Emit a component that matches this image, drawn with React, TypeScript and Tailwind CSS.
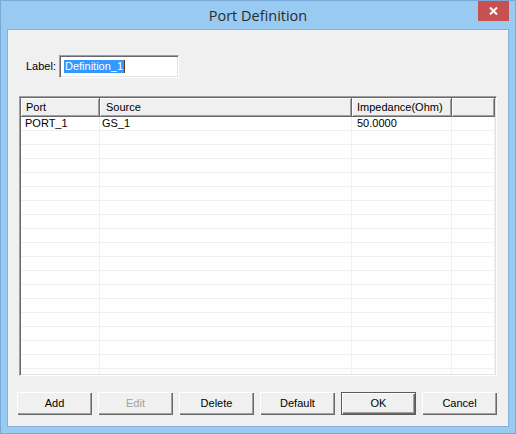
import React from "react";

const rows = Array.from({ length: 19 });

function Btn({ label, disabled, def }: { label: string; disabled?: boolean; def?: boolean }) {
  return (
    <div
      className={
        "w-[75px] h-[23px] flex items-center justify-center bg-[#f0f0f0] " +
        (def
          ? "border border-[#5a5a5a] shadow-[inset_1px_1px_0_#fff,inset_-1px_-1px_0_#696969,inset_-2px_-2px_0_#a0a0a0]"
          : "shadow-[inset_1px_1px_0_#fff,inset_-1px_-1px_0_#696969,inset_-2px_-2px_0_#a0a0a0]")
      }
    >
      <span className={disabled ? "text-[#a0a0a0]" : "text-black"}>{label}</span>
    </div>
  );
}

function HeadCell({ w, text, pl }: { w: string; text?: string; pl: string }) {
  return (
    <div
      className={
        w +
        " " +
        pl +
        " h-full flex items-center bg-[#f0f0f0] border-r border-b border-[#696969] shadow-[inset_1px_1px_0_#fff,inset_-1px_-1px_0_#a0a0a0] overflow-hidden whitespace-nowrap"
      }
    >
      {text}
    </div>
  );
}

export default function App() {
  return (
    <div className="w-[516px] h-[434px] bg-[#99cbf2] border border-[#7aa8d8] flex flex-col font-['Liberation_Sans',Tahoma,Arial,sans-serif] text-[11px] text-black">
      <div className="h-[28px] grid grid-cols-[1fr_auto_1fr] items-start">
        <div />
        <div className="h-[28px] flex items-center pt-[2px] font-['Open_Sans','Noto_Sans',sans-serif] text-[14.5px] text-[#2b2b2b]">
          Port Definition
        </div>
        <div className="flex justify-end pr-[6px]">
          <div className="w-[31px] h-[20px] bg-[#c75050] flex items-center justify-center">
            <svg width="9" height="8" viewBox="0 0 9 8">
              <path d="M1 0.5 L8 7.5 M8 0.5 L1 7.5" stroke="#fff" strokeWidth="2" />
            </svg>
          </div>
        </div>
      </div>
      <div className="mx-[6px] border border-[#86afdb] bg-[#f0f0f0] h-[398px] flex flex-col">
        <div className="flex items-center mt-[25px] ml-[18px] h-[23px]">
          <span className="w-[33px]">Label:</span>
          <div className="w-[120px] h-[23px] bg-white border-t border-l border-[#a0a0a0] border-r border-b border-r-white border-b-white shadow-[inset_1px_1px_0_#696969,inset_-1px_-1px_0_#e3e3e3] flex items-center pl-[4px]">
            <span className="bg-[#3399ff] text-white leading-[13px] h-[13px] px-[1px]">Definition_1</span>
            <span className="w-[1px] h-[13px] bg-[#5a3b1a]" />
          </div>
        </div>
        <div className="mt-[18px] ml-[11px] w-[478px] h-[280px] bg-white border-t border-l border-[#a0a0a0] border-r border-b border-r-white border-b-white shadow-[inset_1px_1px_0_#696969,inset_-1px_-1px_0_#e3e3e3] p-[1px] pr-[1px] overflow-hidden">
          <div className="h-full flex flex-col overflow-hidden">
            <div className="h-[19px] flex shrink-0">
              <HeadCell w="w-[79px]" pl="pl-[5px]" text="Port" />
              <HeadCell w="w-[252px]" pl="pl-[6px]" text="Source" />
              <HeadCell w="w-[100px]" pl="pl-[5px]" text="Impedance(Ohm)" />
              <HeadCell w="flex-1" pl="pl-[5px]" />
            </div>
            {rows.map((_, i) => (
              <div key={i} className="h-[14px] shrink-0 flex border-b border-[#f0f0f0]">
                <div className="w-[79px] pl-[4px] flex items-center border-r border-[#f0f0f0] leading-[13px]">
                  {i === 0 ? "PORT_1" : ""}
                </div>
                <div className="w-[252px] pl-[2px] flex items-center border-r border-[#f0f0f0] leading-[13px]">
                  {i === 0 ? "GS_1" : ""}
                </div>
                <div className="w-[100px] pl-[5px] flex items-center border-r border-[#f0f0f0] leading-[13px]">
                  {i === 0 ? "50.0000" : ""}
                </div>
                <div className="flex-1 border-r border-[#f0f0f0]" />
              </div>
            ))}
          </div>
        </div>
        <div className="mt-[16px] ml-[9px] flex gap-[6px]">
          <Btn label="Add" />
          <Btn label="Edit" disabled />
          <Btn label="Delete" />
          <Btn label="Default" />
          <Btn label="OK" def />
          <Btn label="Cancel" />
        </div>
      </div>
    </div>
  );
}
